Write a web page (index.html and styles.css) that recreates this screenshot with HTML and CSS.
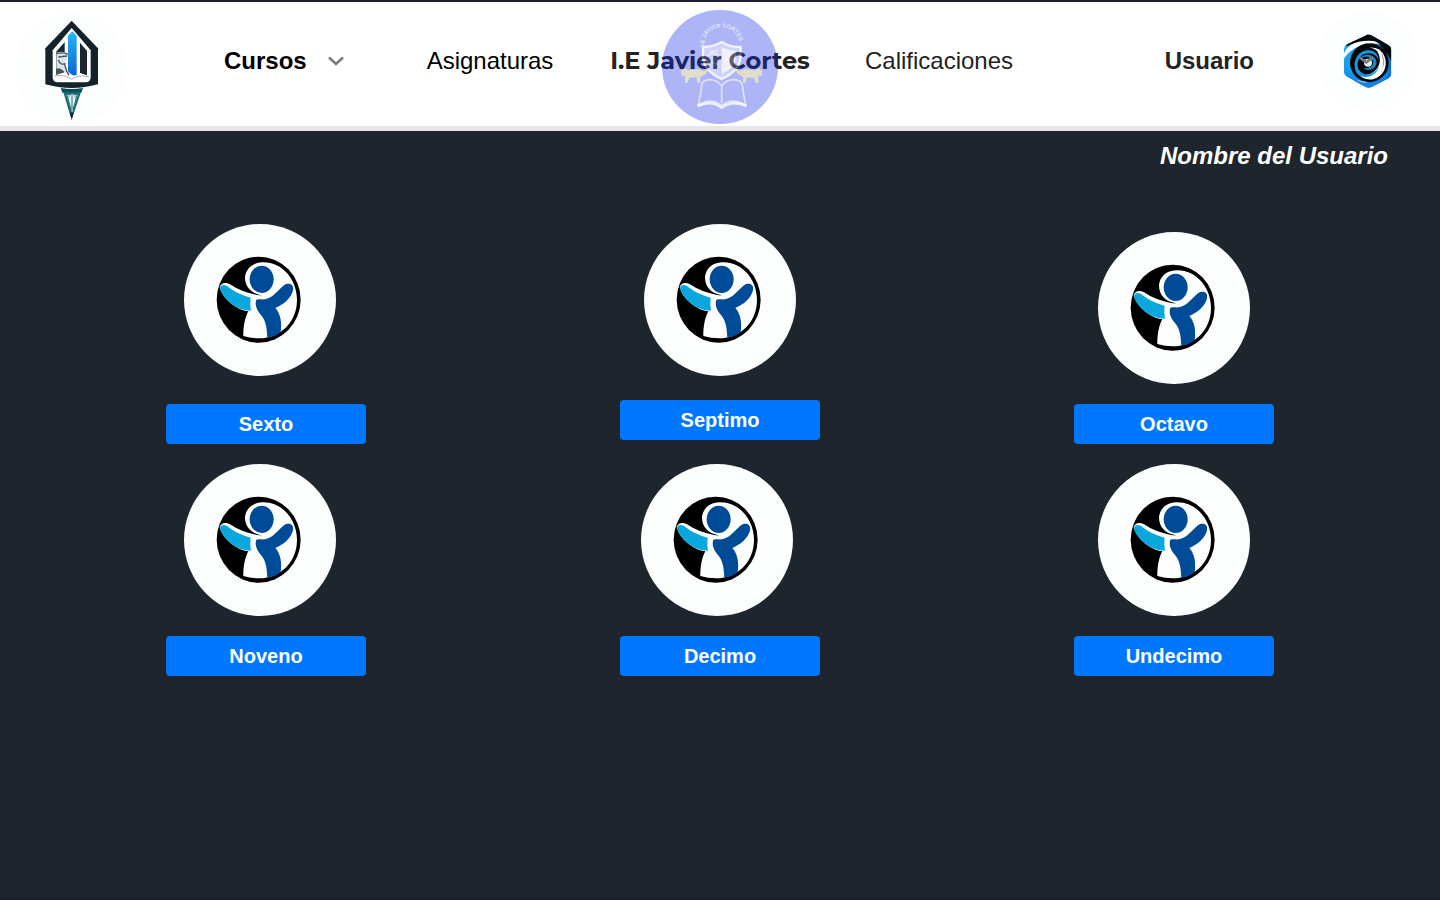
FILE: index.html
```html
<!DOCTYPE html>
<html lang="es">
<head>
<meta charset="utf-8">
<meta name="viewport" content="width=device-width, initial-scale=1">
<title>I.E Javier Cortes</title>
<link rel="stylesheet" href="styles.css">
</head>
<body>
<svg class="sprite" aria-hidden="true">
  <symbol id="student" viewBox="12 12 456 456">
    <circle cx="240" cy="240" r="228" fill="#fcfefe"/>
    <ellipse cx="236" cy="239" rx="126" ry="129" fill="#000"/>
    <path d="M246 127C304 124 351 176 351 240C351 306 301 355 238 355Q212 355 190 348C190 320 194 292 206 272L214 228L246 226C212 220 195 200 195 172C197 146 218 128 246 127Z" fill="#fcfefe"/>
    <path d="M119 201C124 187 138 187 150 193Q184 216 228 224L242 228L222 273L206 274C170 270 128 238 119 201Z" fill="#fcfefe"/>
    <path d="M120 206C120 192 136 192 146 202Q174 224 212 233Q209 251 213 272C174 271 134 244 120 206Z" fill="#08a8df"/>
    <ellipse cx="245" cy="178" rx="36" ry="41" fill="#004b97"/>
    <path d="M228 241Q232 236 242 238C276 242 292 211 312 196C327 186 343 193 339 211C334 234 311 254 286 264C302 282 306 308 302 337Q284 351 262 353C260 314 256 299 238 279Q224 261 228 241Z" fill="#004b97"/>
  </symbol>
</svg>

<header class="topbar">
  <a class="logo" href="#" aria-label="Inicio">
    <svg viewBox="15 39 336 336" aria-hidden="true">
      <defs>
        <linearGradient id="tower" x1="0" y1="0" x2="0" y2="1"><stop offset="0" stop-color="#25b8fa"/><stop offset="1" stop-color="#0967ce"/></linearGradient>
      </defs>
      <circle cx="183" cy="207" r="167" fill="#fcfefe"/>
      <path d="M185 62L264 145V253Q225 264 185 264Q145 264 106 253V145Z" fill="#14232a"/>
      <path d="M185 84L242 151V232Q242 247 226 247H144Q128 247 128 232V151Z" fill="#fff"/>
      <path d="M138 156L164 126V216L138 224Z" fill="#18262d"/>
      <path d="M210 128L231 153V226L210 219Z" fill="#18262d"/>
      <path d="M174 107L187 94L200 107V224Q188 232 174 213Z" fill="url(#tower)"/>
      <path d="M139 158Q157 151 175 160L173 174Q170 184 164 188Q170 212 182 226L164 216Q151 205 139 210Z" fill="#dfe6e9"/>
      <path d="M140 162Q156 155 174 163M145 171L171 168M145 180Q151 197 167 191M164 194Q168 213 177 226" fill="none" stroke="#46545b" stroke-width="4"/>
      <path d="M138 206Q152 201 163 217L138 224Z" fill="#46545b"/>
      <path d="M133 228Q163 222 184 238Q206 223 237 230" fill="none" stroke="#a8b3b7" stroke-width="3"/>
      <path d="M152 264Q185 270 219 264L214 278H157Z" fill="#08505d"/>
      <path d="M160 276H213L188 350Q185 357 181 348Z" fill="#176775"/>
      <path d="M168 284H204L187 338Z" fill="#a9cdd1"/>
      <path d="M184 282L174 300L185 334L197 300L189 282" fill="#e9f3f3"/>
      <path d="M186 284V326M171 286L184 330M201 286L189 330" stroke="#276f7b" stroke-width="3"/>
      <path d="M180 338L185 361L191 338Z" fill="#15252d"/>
    </svg>
  </a>

  <div class="course-cell">
    <label class="course-picker">
      <select aria-label="Cursos"><option>Cursos</option></select>
      <svg class="chevron" viewBox="0 0 16 10" aria-hidden="true"><path d="M1 1.500L8 8L15 1.500" fill="none" stroke="#777a80" stroke-width="2.500"/></svg>
    </label>
  </div>

  <a class="nav-link" href="#">Asignaturas</a>

  <div class="school">
    <h1>I.E Javier Cortes</h1>
    <svg class="crest" viewBox="36 30 348 342" aria-hidden="true">
      <defs><path id="arc" d="M163 140V128A52 46 0 0 1 267 128V150"/></defs>
      <ellipse cx="210" cy="201" rx="174" ry="171" fill="#1428ea"/>
      <g fill="none" stroke="#fff" stroke-opacity=".8" stroke-linejoin="round">
        <path d="M159 141Q190 141 215 126Q241 142 272 141V173Q267 214 215 237Q163 214 159 173Z" fill="#fff" fill-opacity=".4" stroke-width="7"/>
        <path d="M215 142Q238 152 258 153V176Q251 207 215 222Z" fill="#fff" fill-opacity=".7" stroke="none"/>
        <path d="M170 170Q188 153 207 166M171 185L206 193M180 157L204 150" stroke-opacity=".5" stroke-width="5"/>
        <path d="M215 257Q190 230 163 243Q153 249 153 272L145 316Q184 290 215 317Q246 290 287 316L279 272Q278 249 269 243Q239 230 215 257V310" stroke-opacity=".6" stroke-width="5"/>
        <path d="M143 318Q184 299 215 323Q249 299 289 318" stroke-width="8"/>
      </g>
      <g fill="#a5a160">
        <path d="M92 214L104 204L113 211L147 207L160 214L179 205L167 222L151 231V249H143L139 232L118 234L113 249H105V226L95 228Z"/>
        <path d="M338 214L326 204L317 211L283 207L270 214L251 205L263 222L279 231V249H287L291 232L312 234L317 249H325V226L335 228Z"/>
      </g>
      <text class="crest-name"><textPath href="#arc">I.E JAVIER CORTES</textPath></text>
    </svg>
  </div>

  <a class="nav-link soft" href="#">Calificaciones</a>
  <a class="nav-link user" href="#">Usuario</a>

  <a class="avatar" href="#" aria-label="Perfil">
    <svg viewBox="24 34 300 300" aria-hidden="true">
      <defs>
        <linearGradient id="hexfill" x1="0" y1="0" x2="1" y2="1"><stop offset="0" stop-color="#20b0f2"/><stop offset=".5" stop-color="#0e91e6"/><stop offset="1" stop-color="#0747b4"/></linearGradient>
        <clipPath id="hex"><path d="M166 108Q174 101 184 107L235 136Q244 141 244 150V221Q244 231 236 236L185 262Q175 267 165 261L111 231Q102 226 102 216V148Q102 139 111 134Z"/></clipPath>
      </defs>
      <circle cx="174" cy="184" r="148" fill="#fcfefe"/>
      <g clip-path="url(#hex)">
        <path d="M95 95H255V275H95Z" fill="url(#hexfill)"/>
        <path d="M110 135Q145 98 178 101L250 132V196Q238 168 222 152L205 131Q160 118 110 140Z" fill="#050607"/>
        <path d="M102 160Q122 118 192 124L210 132Q148 128 102 178Z" fill="#fff"/>
        <path d="M102 176Q128 138 172 132Q145 150 126 172Q118 200 128 222Q104 205 102 176Z" fill="#19a5ec"/>
        <circle cx="178" cy="189" r="58" fill="#050607"/>
        <path d="M194 145C225 154 235 188 222 213C204 247 158 249 139 215Q162 234 186 220C216 202 216 168 194 145Z" fill="#fff"/>
        <path d="M178 143Q216 143 224 174Q205 150 178 143Z" fill="#fff"/>
        <path d="M211 153Q231 180 217 209Q223 181 211 153Z" fill="#9da5aa"/>
        <path d="M138 217C124 180 149 149 179 152Q203 155 207 181Q195 160 176 161C148 162 138 185 145 208C164 239 198 220 207 200C202 229 158 247 138 217Z" fill="#1298e5"/>
        <path d="M151 175C161 160 190 162 198 180C206 202 181 219 160 206Q189 206 190 187Q184 170 163 171Z" fill="#1688c6"/>
        <circle cx="174" cy="189" r="12" fill="#e8edef"/>
        <path d="M108 218Q139 251 180 250Q216 246 246 202Q228 260 176 264Q136 255 108 218Z" fill="#1683e2"/>
        <path d="M118 226Q144 248 174 247Q154 254 118 226Z" fill="#e9f5fb"/>
      </g>
      <path d="M149 173L169 188L188 173" fill="none" stroke="#777b80" stroke-width="8"/>
    </svg>
  </a>
</header>

<main>
  <p class="username">Nombre del Usuario</p>
  <section class="grades" aria-label="Cursos">
    <article class="grade lead roomy"><svg aria-hidden="true"><use href="#student"/></svg><button type="button">Sexto</button></article>
    <article class="grade medium"><svg aria-hidden="true"><use href="#student"/></svg><button type="button">Septimo</button></article>
    <article class="grade"><svg aria-hidden="true"><use href="#student"/></svg><button type="button">Octavo</button></article>
    <article class="grade lead"><svg aria-hidden="true"><use href="#student"/></svg><button type="button">Noveno</button></article>
    <article class="grade middle"><svg aria-hidden="true"><use href="#student"/></svg><button type="button">Decimo</button></article>
    <article class="grade"><svg aria-hidden="true"><use href="#student"/></svg><button type="button">Undecimo</button></article>
  </section>
</main>
</body>
</html>
```

FILE: styles.css
```css
* { box-sizing: border-box; }

body {
  margin: 0;
  min-height: 100vh;
  background: #1e252c;
  border-top: 2px solid #1c202b;
  border-bottom: 2px solid #191f26;
  color: #fff;
  font-family: "Liberation Sans", Arial, sans-serif;
  font-size: 24px;
  line-height: 28px;
}

.sprite { position: absolute; width: 0; height: 0; }
svg { display: block; }

.topbar {
  display: grid;
  grid-template-columns: 142fr 248fr 200fr 260fr 178fr 268fr 144fr;
  grid-template-rows: 118px;
  align-items: center;
  padding-bottom: 6px;
  box-sizing: content-box;
  background: #fff;
  border-bottom: 5px solid #e7e7e7;
  color: #222;
}

.logo { align-self: start; justify-self: center; margin-top: 11px; }
.logo svg { width: 112px; height: 112px; }
.avatar { justify-self: center; }
.avatar svg { width: 100px; height: 100px; }

.course-cell { padding-left: 82px; }

.course-picker {
  display: inline-grid;
  grid-template-columns: 120px;
  align-items: center;
}

.course-picker select,
.chevron { grid-area: 1 / 1; }

.course-picker select {
  appearance: none;
  width: 100%;
  padding: 0;
  border: 0;
  background: none;
  color: #000;
  font: inherit;
  font-weight: bold;
}

.chevron {
  justify-self: end;
  width: 16px;
  height: 10px;
  pointer-events: none;
}

.nav-link {
  justify-self: center;
  color: #000;
  text-decoration: none;
}

.nav-link.soft { color: #222; }

.nav-link.user {
  justify-self: end;
  padding-right: 42px;
  color: #222;
  font-weight: bold;
}

.school {
  position: relative;
  display: grid;
  place-items: center;
  align-self: stretch;
}

.school h1 {
  margin: 0;
  padding-right: 20px;
  font-family: Montserrat, Inter, sans-serif;
  font-size: 24px;
  font-weight: 700;
  white-space: nowrap;
}

.crest {
  position: absolute;
  top: 8px;
  left: calc(50% - 58px);
  width: 116px;
  height: 114px;
  opacity: 0.34;
  pointer-events: none;
}

.crest-name {
  fill: #fff;
  fill-opacity: 0.7;
  font-size: 17px;
  font-weight: bold;
}

.username {
  margin: 0;
  padding: 11px 52px 0;
  text-align: right;
  font-style: italic;
  font-weight: bold;
}

.grades {
  display: grid;
  grid-template-columns: repeat(3, 200px);
  justify-content: space-between;
  gap: 20px;
  padding: 54px 166px 20px;
}

.grade {
  display: flex;
  flex-direction: column;
  align-items: center;
  align-self: end;
  gap: 20px;
}

.grade svg { width: 152px; height: 152px; }
.grade.lead svg { margin-right: 12px; }
.grade.middle svg { margin-right: 6px; }
.grade.roomy { gap: 28px; }
.grade.medium { gap: 24px; align-self: start; }

.grade button {
  width: 100%;
  height: 40px;
  padding: 0;
  border: 0;
  border-radius: 4px;
  background: #0077ff;
  color: #fff;
  font: bold 20px "Liberation Sans", Arial, sans-serif;
  cursor: pointer;
}
```
